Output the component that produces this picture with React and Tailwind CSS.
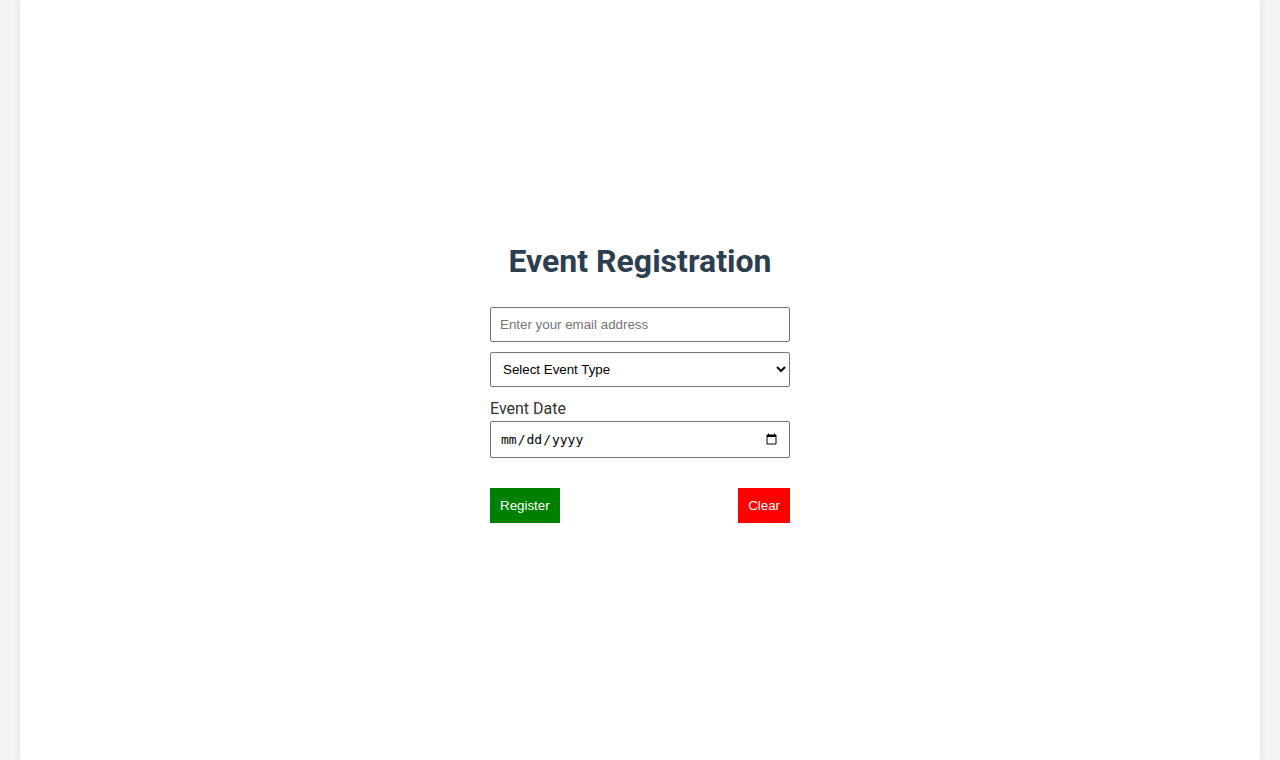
export default function App() {
  return (
    <div className="min-h-screen bg-[#f4f4f4]">
      <div className="mx-[20px] min-h-[760px] pt-[6px] bg-white shadow-[0_0_8px_rgba(0,0,0,0.08)] flex items-center justify-center">
        <div className="w-[300px] flex flex-col">
          <h2 className="text-center font-['Roboto'] font-bold text-[32px] leading-[37.5px] text-[#2c3e50] mb-[26px]">
            Event Registration
          </h2>
          <input
            type="email"
            placeholder="Enter your email address"
            className="block w-full h-[35px] px-[9px] border border-[#767676] rounded-[2px] font-['Liberation_Sans'] text-[13.333px] text-black placeholder:text-[#757575] bg-white"
          />
          <select
            defaultValue=""
            className="block w-full h-[35px] mt-[10px] px-[8px] border border-[#767676] rounded-[2px] font-['Liberation_Sans'] text-[13.333px] text-black bg-white"
          >
            <option value="">Select Event Type</option>
            <option value="conference">Conference</option>
            <option value="workshop">Workshop</option>
            <option value="webinar">Webinar</option>
          </select>
          <label className="block mt-[12px] mb-[3px] font-['Roboto'] text-[16px] leading-[19px] text-[#333333]">
            Event Date
          </label>
          <input
            type="date"
            className="block w-full h-[37px] px-[9px] border border-[#767676] rounded-[2px] font-['DejaVu_Sans_Mono',monospace] text-[13px] text-black bg-white"
          />
          <div className="flex justify-between mt-[30px]">
            <button className="h-[35px] px-[10px] pt-[2px] bg-[#008000] text-white font-['Liberation_Sans'] text-[13.333px]">
              Register
            </button>
            <button className="h-[35px] px-[10px] pt-[2px] bg-[#ff0000] text-white font-['Liberation_Sans'] text-[13.333px]">
              Clear
            </button>
          </div>
        </div>
      </div>
    </div>
  );
}
